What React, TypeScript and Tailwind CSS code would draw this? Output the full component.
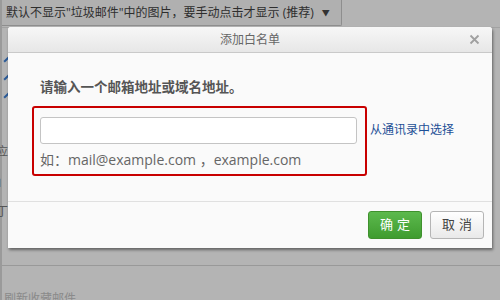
export default function App() {
  const cjk = { fontFamily: '"Open Sans", "Noto Sans CJK SC", sans-serif' };

  return (
    <div
      className="relative w-[500px] h-[300px] overflow-hidden bg-[#b4b4b4]"
      style={cjk}
    >
      {/* page behind the mask */}
      <div className="flex flex-col h-full border-l-2 border-[#9a9a9a]">
        <div className="flex h-[28px] border-b border-[#a2a2a2]">
          <div className="flex items-center gap-[8px] h-[26px] w-[340px] pl-[4px] bg-[#b0b0b0] border-r border-b border-[#8e8e8e] rounded-br-[2px] text-[12px] text-[#2e2e2e]">
            <span>默认不显示"垃圾邮件"中的图片，要手动点击才显示 (推荐)</span>
            <span className="text-[8px] text-[#333]">▼</span>
          </div>
        </div>
        <div className="flex flex-col gap-[16px] pt-[30px] pl-[1px] w-[8px]">
          <div className="h-[2px] w-[8px] bg-[#2a5a98] -rotate-45" />
          <div className="h-[2px] w-[8px] bg-[#2a5a98] -rotate-45" />
          <div className="h-[2px] w-[8px] bg-[#2a5a98] -rotate-45" />
        </div>
        <div className="mt-[50px] text-[12px] text-[#555] leading-none -ml-[6px]">应</div>
        <div className="mt-[18px] text-[12px] text-[#555] leading-none -ml-[6px]">」</div>
        <div className="mt-[18px] text-[12px] text-[#555] leading-none -ml-[6px]">丁</div>
        <div className="mt-auto mb-[34px] border-t border-[#999]" />
        <div className="h-[0px] relative">
          <span className="absolute left-[2px] -top-[10px] text-[12px] text-[#8a8a8a]">刷新收藏邮件</span>
        </div>
      </div>

      {/* dialog */}
      <div className="absolute left-[8px] top-[27px] w-[484px] h-[221px] flex flex-col bg-[#fafafa] rounded-t-[3px] shadow-[1px_2px_3px_rgba(0,0,0,0.45)]">
        <div className="relative flex items-center justify-center h-[26px] rounded-t-[3px] bg-gradient-to-b from-[#f7f7f7] to-[#e7e7e7] border-b border-[#c9c9c9] text-[12px] text-[#666]">
          添加白名单
          <span className="absolute right-[12px] top-[7px] text-[#a0a0a0]">
            <svg width="11" height="11" viewBox="0 0 11 11">
              <path d="M1.5 1.5 L9.5 9.5 M9.5 1.5 L1.5 9.5" stroke="#a0a0a0" strokeWidth="1.8" />
            </svg>
          </span>
        </div>

        <div className="flex flex-col flex-1 pl-[32px]">
          <div className="mt-[28px] text-[13.5px] font-bold text-[#555] leading-none">
            请输入一个邮箱地址或域名地址。
          </div>
          <div className="flex items-start mt-[11px]">
            <div className="flex flex-col w-[335px] h-[70px] -ml-[8px] border-2 border-[#c80000] rounded-[3px] pl-[6px] pt-[9px]">
              <div className="w-[317px] h-[27px] bg-white border border-[#c4c4c4] rounded-[3px]" />
              <div className="mt-[9px] text-[14px] text-[#666] leading-none">
                如：mail@example.com ，example.com
              </div>
            </div>
            <a className="ml-[3px] mt-[18px] text-[12px] text-[#1d4f96] leading-none">从通讯录中选择</a>
          </div>
        </div>

        <div className="flex justify-end gap-[8px] h-[47px] pt-[9px] pr-[8px] border-t border-[#e0e0e0]">
          <button className="w-[54px] h-[28px] rounded-[3px] border border-[#3f912d] bg-gradient-to-b from-[#5cb94d] to-[#3f9c2f] text-white text-[13px] tracking-[4px] pl-[4px]">
            确定
          </button>
          <button className="w-[54px] h-[28px] rounded-[3px] border border-[#b5b5b5] bg-gradient-to-b from-[#ffffff] to-[#e9e9e9] text-[#444] text-[13px] tracking-[4px] pl-[4px]">
            取消
          </button>
        </div>
      </div>
    </div>
  );
}
